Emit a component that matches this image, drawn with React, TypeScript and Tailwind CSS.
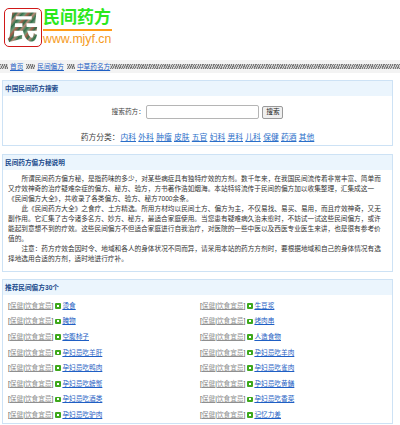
const FONT = "font-['Liberation_Sans','Noto_Sans_CJK_SC',sans-serif]";

const CATEGORIES = ["内科", "外科", "肿瘤", "皮肤", "五官", "妇科", "男科", "儿科", "保健", "药酒", "其他"];

const LEFT_ITEMS = ["烫食", "腌物", "空腹柿子", "孕妇忌吃羊肝", "孕妇忌吃鸭肉", "孕妇忌吃螃蟹", "孕妇忌吃酒类", "孕妇忌吃驴肉"];
const RIGHT_ITEMS = ["生豆浆", "烤肉串", "人造食物", "孕妇忌吃羊肉", "孕妇忌吃雀肉", "孕妇忌吃黄鳝", "孕妇忌吃香菜", "记忆力差"];

function Logo() {
  return (
    <div className="flex items-start pt-[8px] pl-[4px] h-[60px]">
      <div className="w-[38px] h-[39px] rounded-[5px] border border-[#d01818] flex items-center justify-center">
        <span className="text-[33px] leading-[36px] font-bold -skew-x-6 text-transparent bg-clip-text bg-[repeating-linear-gradient(125deg,#2f6b48_0px,#6f9a78_3px,#a8604c_5px,#2f6b48_8px,#b98a78_10px,#3f7a54_13px)]">
          民
        </span>
      </div>
      <div className="ml-[1px] w-[69px] flex flex-col">
        <div className="text-[17px] leading-[19px] font-bold text-[#2be81c] whitespace-nowrap">民间药方</div>
        <div className="h-[2px] bg-[#ff9c1a] mt-[2px]" />
        <div className="text-[12.3px] leading-[14px] mt-[1px] text-[#f59a23] whitespace-nowrap">www.mjyf.cn</div>
      </div>
    </div>
  );
}

function Hatch({ className }: { className: string }) {
  return (
    <span className={`h-[5px] bg-[repeating-linear-gradient(115deg,#7a7a7a_0px,#7a7a7a_1px,#d0d0d0_1px,#d0d0d0_2px)] ${className}`} />
  );
}

function NavBar() {
  return (
    <div className="h-[13px] bg-[#f3f3f3] flex items-center text-[6.67px] text-[#1f5fc4]">
      <Hatch className="w-[8px]" />
      <a className="underline mx-[2px] whitespace-nowrap">首页</a>
      <Hatch className="w-[9px] ml-[1px]" />
      <a className="underline mx-[2px] whitespace-nowrap">民间偏方</a>
      <Hatch className="w-[8px] ml-[1px]" />
      <a className="underline ml-[2px] whitespace-nowrap">中草药名方</a>
      <Hatch className="flex-1" />
    </div>
  );
}

function Panel({ title, children, className }: { title: string; children: React.ReactNode; className?: string }) {
  return (
    <div className={`border border-[#cde2f5] ml-[2px] w-[391px] bg-white ${className ?? ""}`}>
      <div className="h-[15px] bg-[#ebf5fd] flex items-center pl-[2px] text-[6.67px] font-bold text-[#1a4a8c]">{title}</div>
      {children}
    </div>
  );
}

function FoodRow({ name }: { name: string }) {
  return (
    <div className="h-[15.6px] flex items-center text-[6.67px] whitespace-nowrap">
      <span className="text-[#555]">[</span>
      <a className="underline text-[#8f8f8f]">保健</a>
      <span className="text-[#555]">|</span>
      <a className="underline text-[#8f8f8f]">饮食宜忌</a>
      <span className="text-[#555]">]</span>
      <span className="ml-[2px] mr-[1.5px] w-[5.5px] h-[5.5px] rounded-[1px] bg-[#3ea81c] flex items-center justify-center">
        <span className="w-[2px] h-[2px] bg-white" />
      </span>
      <a className="underline text-[#1f5fc4]">{name}</a>
    </div>
  );
}

export default function App() {
  return (
    <div className={`w-[400px] h-[425px] overflow-hidden bg-white ${FONT}`}>
      <Logo />
      <NavBar />

      <Panel title="中国民间药方搜索" className="mt-[7px]">
        <div className="h-[49px] flex flex-col items-center">
          <div className="flex items-center h-[14px] mt-[9px] text-[6.67px] text-[#444]">
            <span>搜索药方：</span>
            <span className="w-[113px] h-[14px] rounded-[2px] border border-[#b5b5b5] bg-white ml-[1.5px]" />
            <span className="ml-[3px] w-[21px] h-[13px] rounded-[2px] border border-[#9a9a9a] bg-[#efefef] text-[6.67px] text-[#222] flex items-center justify-center">
              搜索
            </span>
          </div>
          <div className="flex items-center h-[14px] mt-[12px] text-[7.78px] text-[#444] whitespace-nowrap">
            <span className="mr-[1px]">药方分类：</span>
            <div className="flex gap-[2.3px]">
              {CATEGORIES.map((c) => (
                <a key={c} className="underline text-[#2a6fc9]">{c}</a>
              ))}
            </div>
          </div>
        </div>
      </Panel>

      <Panel title="民间药方偏方秘说明" className="mt-[8px]">
        <div className="pl-[5px] pr-[9px] pt-[4px] pb-[7px] text-[6.67px] leading-[10px] text-[#333]">
          <p className="indent-[13.4px]">
            所谓民间药方偏方秘，是指药味的多少，对某些病症具有独特疗效的方剂。数千年来，在我国民间流传着非常丰富、简单而又疗效神奇的治疗疑难杂症的偏方、秘方、验方，方书著作浩如烟海。本站特将流传于民间的偏方加以收集整理，汇集成这一《民间偏方大全》，共收录了各类偏方、验方、秘方7000余条。
          </p>
          <p className="indent-[13.4px]">
            此《民间药方大全》之食疗、土方精选。所用方材均以民间土方、偏方为主，不仅易找、易买、易用，而且疗效神奇，又无副作用。它汇集了古今诸多名方、妙方、秘方，最适合家庭使用。当您患有疑难病久治未愈时，不妨试一试这些民间偏方，或许能起到意想不到的疗效。这些民间偏方不但适合家庭进行自我治疗，对医院的一些中医以及西医专业医生来讲，也是很有参考价值的。
          </p>
          <p className="indent-[13.4px]">
            注意：药方疗效会因时令、地域和各人的身体状况不同而异，请采用本站的药方方剂时，要根据地域和自己的身体情况有选择地选用合适的方剂，适时地进行疗补。
          </p>
        </div>
      </Panel>

      <Panel title="推荐民间偏方30个" className="mt-[7px]">
        <div className="grid grid-cols-[192px_1fr] pl-[5px] pt-[3px]">
          <div>
            {LEFT_ITEMS.map((n) => (
              <FoodRow key={n} name={n} />
            ))}
          </div>
          <div>
            {RIGHT_ITEMS.map((n) => (
              <FoodRow key={n} name={n} />
            ))}
          </div>
        </div>
      </Panel>
    </div>
  );
}
